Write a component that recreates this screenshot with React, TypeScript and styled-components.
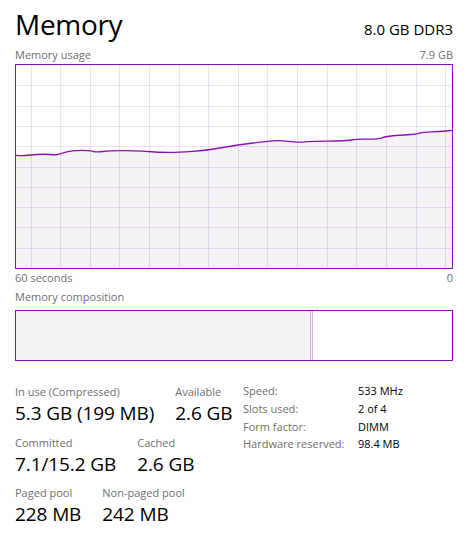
import React from 'react';
import styled, { createGlobalStyle } from 'styled-components';

const PURPLE = '#8b12ae';
const FILL = '#f4f2f5';
const LABEL = '#6f6f6f';

const GlobalStyle = createGlobalStyle`
    html, body {
        margin: 0;
        padding: 0;
        background: #ffffff;
    }
    body {
        font-family: "Open Sans", "Noto Sans", "Liberation Sans", sans-serif;
        color: #000000;
    }
`;

const Page = styled.div`
    width: 467px;
    height: 536px;
    box-sizing: border-box;
    padding: 4px 14px 0 15px;
    display: flex;
    flex-direction: column;
`;

const Header = styled.div`
    display: flex;
    justify-content: space-between;
    align-items: baseline;
    height: 40px;
`;

const Title = styled.h1`
    margin: 0;
    font-size: 28px;
    line-height: 40px;
    font-weight: 400;
    letter-spacing: -0.3px;
`;

const Spec = styled.div`
    font-size: 15px;
    line-height: 20px;
`;

const AxisRow = styled.div<{ $gap: number }>`
    display: flex;
    justify-content: space-between;
    font-size: 11px;
    line-height: 14px;
    color: ${LABEL};
    margin-top: ${p => p.$gap}px;
`;

const ChartBox = styled.div`
    margin-top: 2px;
    width: 438px;
    height: 205px;
    box-sizing: border-box;
    border: 1px solid ${PURPLE};
    display: flex;
`;

const CompositionBar = styled.div`
    margin-top: 6px;
    width: 438px;
    height: 51px;
    box-sizing: border-box;
    border: 1px solid ${PURPLE};
    display: flex;
`;

const Segment = styled.div<{ $kind: 'inuse' | 'modified' | 'free' }>`
    height: 100%;
    box-sizing: border-box;
    background: ${p => (p.$kind === 'free' ? '#ffffff' : FILL)};
    flex: ${p => (p.$kind === 'free' ? '1' : '0 0 auto')};
    ${p => p.$kind === 'modified' && `
        width: 3px;
        border-left: 1px solid #d5a9e2;
        border-right: 1px solid #d5a9e2;
    `}
`;

const Details = styled.div`
    margin-top: 24px;
    display: grid;
    grid-template-columns: 228px 1fr;
`;

const StatsColumn = styled.div`
    display: flex;
    flex-direction: column;
    gap: 10.5px;
`;

const StatRow = styled.div`
    display: flex;
    gap: 21px;
`;

const Stat = styled.div`
    display: flex;
    flex-direction: column;
`;

const StatLabel = styled.div`
    font-size: 11px;
    line-height: 14px;
    color: ${LABEL};
    white-space: nowrap;
`;

const StatValue = styled.div`
    margin-top: 3px;
    font-size: 19px;
    line-height: 23px;
    white-space: nowrap;
    letter-spacing: -0.1px;
`;

const SpecTable = styled.div`
    margin-top: -3px;
    display: grid;
    grid-template-columns: 115px 1fr;
    grid-auto-rows: 17.8px;
    font-size: 11px;
    line-height: 17.8px;
`;

const SpecKey = styled.div`
    color: ${LABEL};
    white-space: nowrap;
`;

const SpecVal = styled.div`
    white-space: nowrap;
`;

const CHART_W = 436;
const CHART_H = 203;

const usage: [number, number][] = [
    [0, 90.3], [4, 91], [14, 90], [29, 89], [39, 90], [44, 89], [56, 85.3],
    [74, 85.3], [80, 87.3], [94, 85.7], [119, 85.7], [134, 86.7], [144, 87.3],
    [162, 87.3], [192, 85.3], [222, 79.7], [252, 76.3], [262, 75.3], [272, 76.3],
    [284, 77.3], [294, 76.3], [329, 76], [341, 74], [362, 74.3], [370, 71.3],
    [389, 69.7], [400, 69.3], [407, 67], [424, 66.7], [436, 65.3],
];

// smooth the samples with quadratic curves through the midpoints
const smoothPath = (pts: [number, number][]) => {
    let d = `M${pts[0][0]} ${pts[0][1]}`;
    for (let i = 1; i < pts.length - 1; i++) {
        const [x, y] = pts[i];
        const [nx, ny] = pts[i + 1];
        d += ` Q${x} ${y} ${(x + nx) / 2} ${(y + ny) / 2}`;
    }
    const last = pts[pts.length - 1];
    return `${d} L${last[0]} ${last[1]}`;
};

const UsageChart: React.FC = () => {
    const line = smoothPath(usage);
    const area = `${line} L${CHART_W} ${CHART_H} L0 ${CHART_H} Z`;
    const vLines = Array.from({ length: 15 }, (_, k) => 14.5 + k * 29.62);
    const hLines = Array.from({ length: 9 }, (_, k) => (k + 1) * (CHART_H / 10));
    return (
        <svg width={CHART_W} height={CHART_H} viewBox={`0 0 ${CHART_W} ${CHART_H}`}>
            <path d={area} fill={FILL} />
            {vLines.map(x => (
                <line key={`v${x}`} x1={Math.round(x) + 0.5} y1={0} x2={Math.round(x) + 0.5} y2={CHART_H}
                    stroke={PURPLE} strokeOpacity={0.13} strokeWidth={1} />
            ))}
            {hLines.map(y => (
                <line key={`h${y}`} x1={0} y1={Math.round(y) + 0.5} x2={CHART_W} y2={Math.round(y) + 0.5}
                    stroke={PURPLE} strokeOpacity={0.13} strokeWidth={1} />
            ))}
            <path d={line} fill="none" stroke={PURPLE} strokeWidth={1.3} strokeLinejoin="round" />
        </svg>
    );
};

const stats = [
    [{ label: 'In use (Compressed)', value: '5.3 GB (199 MB)' }, { label: 'Available', value: '2.6 GB' }],
    [{ label: 'Committed', value: '7.1/15.2 GB' }, { label: 'Cached', value: '2.6 GB' }],
    [{ label: 'Paged pool', value: '228 MB' }, { label: 'Non-paged pool', value: '242 MB' }],
];

const specs = [
    ['Speed:', '533 MHz'],
    ['Slots used:', '2 of 4'],
    ['Form factor:', 'DIMM'],
    ['Hardware reserved:', '98.4 MB'],
];

export default function App() {
    const inUseWidth = 294;
    return (
        <>
            <GlobalStyle />
            <Page>
                <Header>
                    <Title>Memory</Title>
                    <Spec>8.0 GB DDR3</Spec>
                </Header>

                <AxisRow $gap={4}>
                    <span>Memory usage</span>
                    <span>7.9 GB</span>
                </AxisRow>
                <ChartBox>
                    <UsageChart />
                </ChartBox>
                <AxisRow $gap={2}>
                    <span>60 seconds</span>
                    <span>0</span>
                </AxisRow>

                <AxisRow $gap={5}>
                    <span>Memory composition</span>
                </AxisRow>
                <CompositionBar>
                    <Segment $kind="inuse" style={{ width: inUseWidth }} />
                    <Segment $kind="modified" />
                    <Segment $kind="free" />
                </CompositionBar>

                <Details>
                    <StatsColumn>
                        {stats.map((row, i) => (
                            <StatRow key={i}>
                                {row.map(s => (
                                    <Stat key={s.label}>
                                        <StatLabel>{s.label}</StatLabel>
                                        <StatValue>{s.value}</StatValue>
                                    </Stat>
                                ))}
                            </StatRow>
                        ))}
                    </StatsColumn>
                    <SpecTable>
                        {specs.map(([k, v]) => (
                            <React.Fragment key={k}>
                                <SpecKey>{k}</SpecKey>
                                <SpecVal>{v}</SpecVal>
                            </React.Fragment>
                        ))}
                    </SpecTable>
                </Details>
            </Page>
        </>
    );
}
